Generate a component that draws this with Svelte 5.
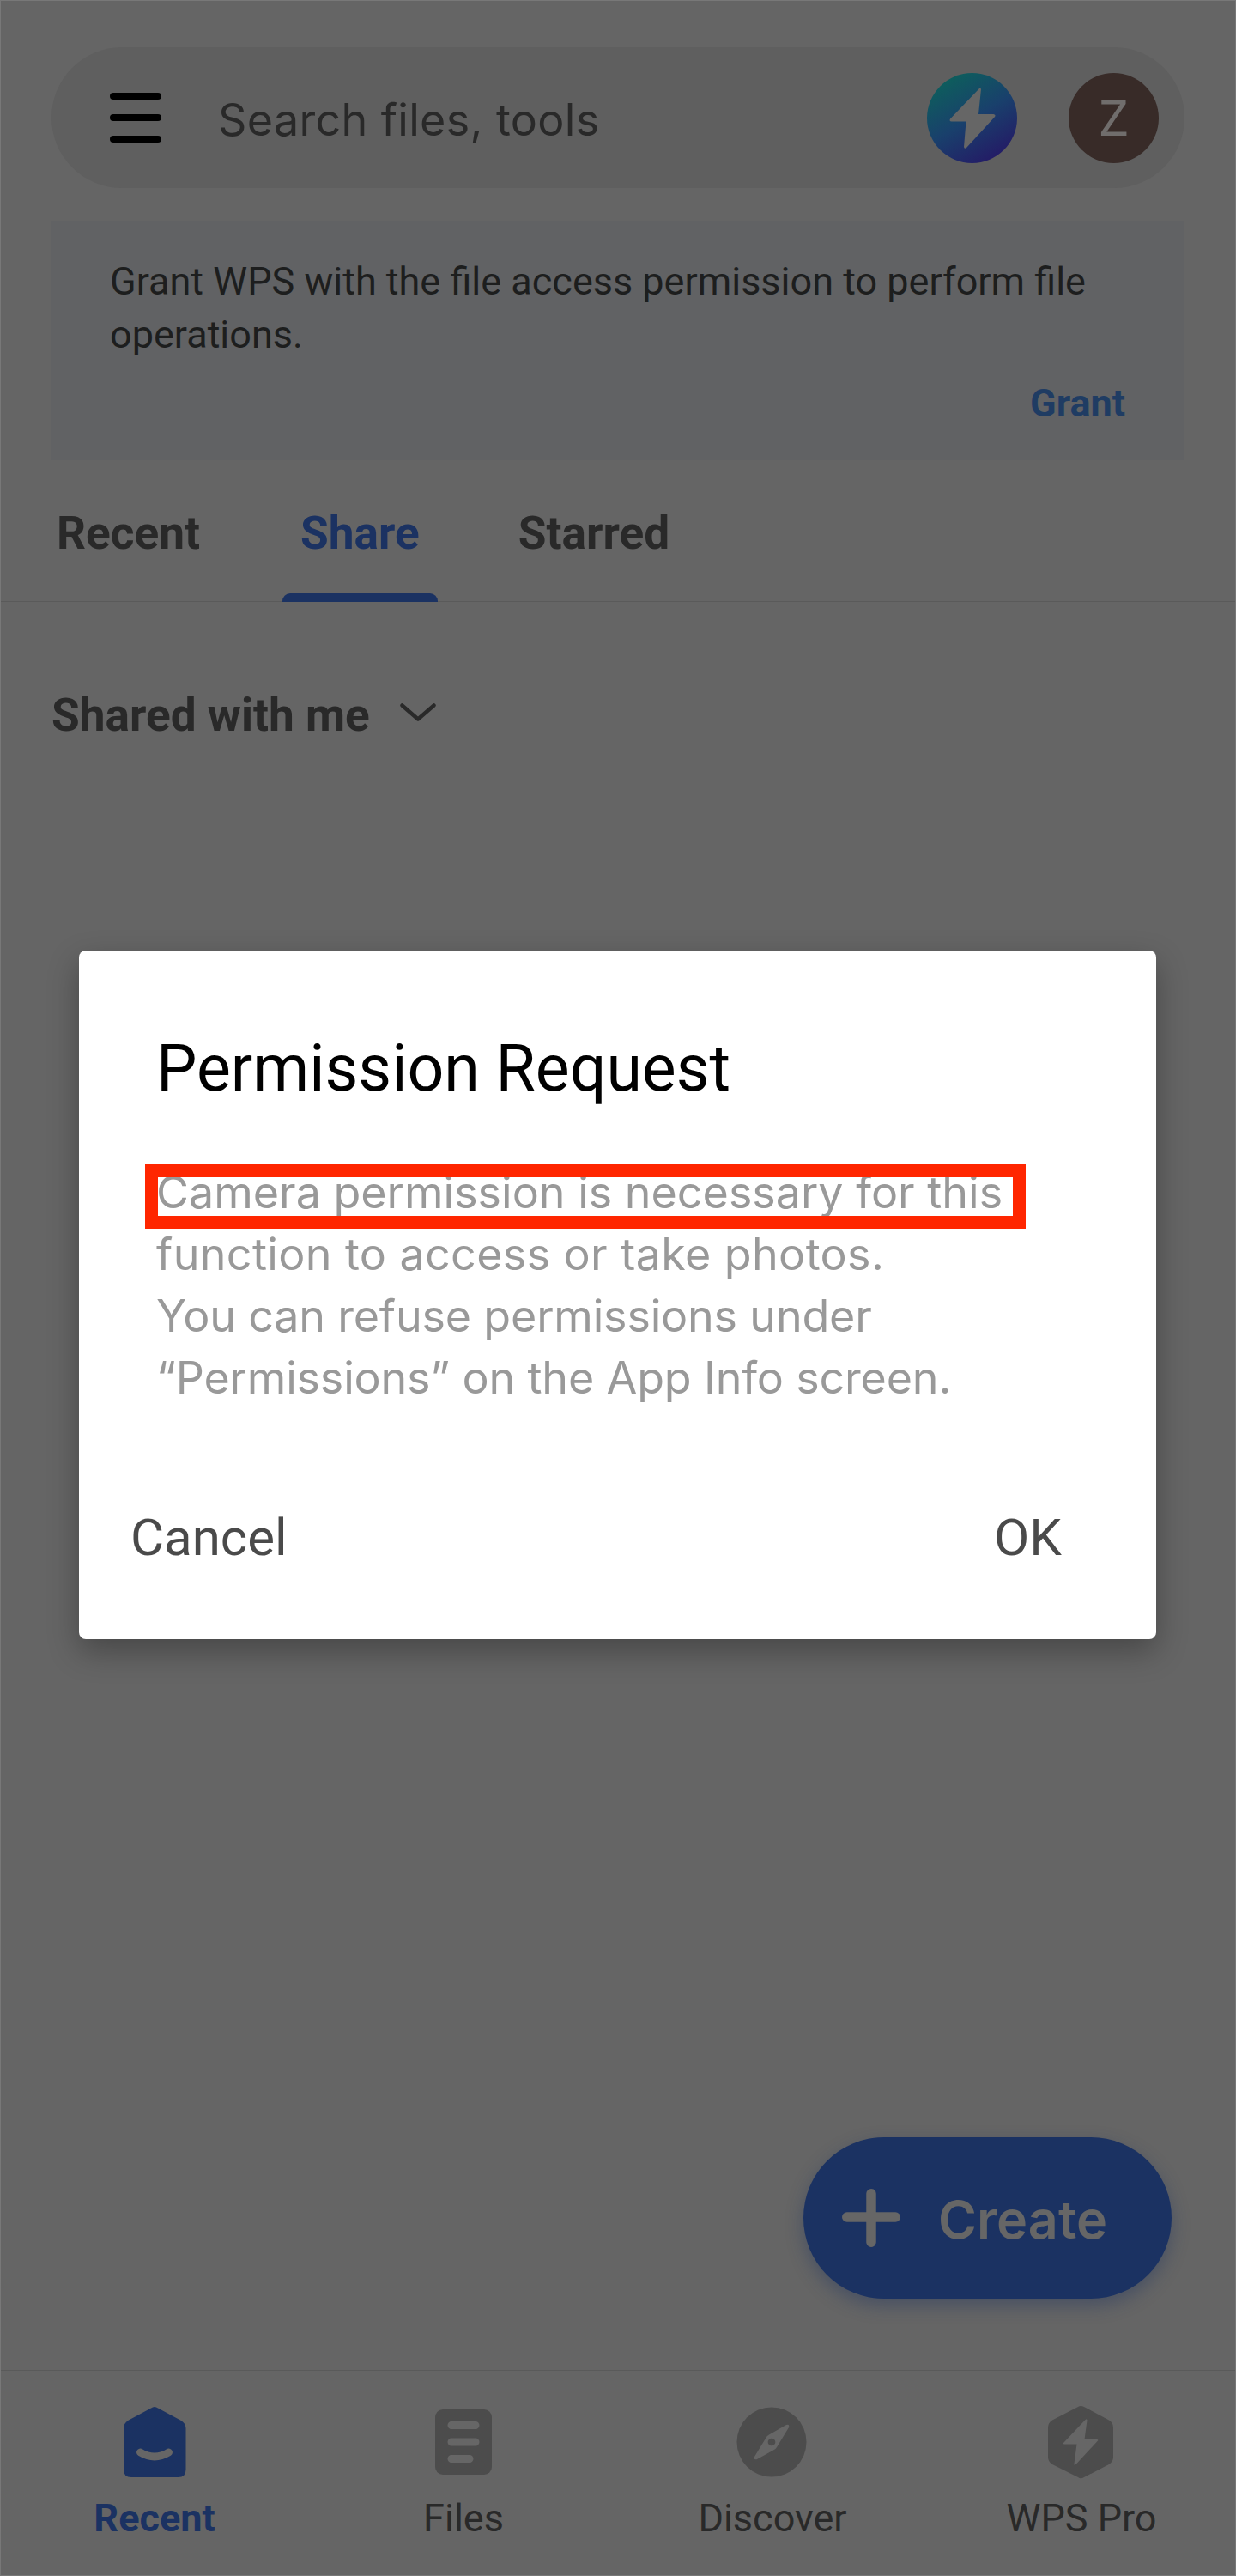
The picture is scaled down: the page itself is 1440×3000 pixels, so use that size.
<script>
  const tabs = [
    { label: 'Recent', active: false },
    { label: 'Share', active: true },
    { label: 'Starred', active: false }
  ];
  const message = [
    'Camera permission is necessary for this',
    'function to access or take photos.',
    'You can refuse permissions under',
    '“Permissions” on the App Info screen.'
  ];
  const nav = [
    { id: 'home', label: 'Recent', active: true },
    { id: 'files', label: 'Files', active: false },
    { id: 'discover', label: 'Discover', active: false },
    { id: 'pro', label: 'WPS Pro', active: false }
  ];
</script>

<div class="screen">
  <header class="search">
    <svg class="menu" width="60" height="58" viewBox="0 0 60 58">
      <rect y="0" width="60" height="8" rx="4" />
      <rect y="25" width="60" height="8" rx="4" />
      <rect y="50" width="60" height="8" rx="4" />
    </svg>
    <span class="placeholder">Search files, tools</span>
    <svg class="boost" width="105" height="105" viewBox="0 0 105 105">
      <defs>
        <linearGradient id="boost-fill" x1="0.2" y1="0.05" x2="0.75" y2="0.98">
          <stop offset="0" stop-color="#0d5f5c" />
          <stop offset="0.5" stop-color="#19406c" />
          <stop offset="1" stop-color="#241a66" />
        </linearGradient>
      </defs>
      <circle cx="52.5" cy="52.5" r="52.5" fill="url(#boost-fill)" />
      <path d="M61 18L27 53.500Q25.500 56 28.500 56.500H45.500L43 86Q43.500 89 46 87L79 51Q80.500 48.500 77.500 48H60L63 19Q62.500 16.500 61 18Z" fill="#666" />
    </svg>
    <span class="avatar">Z</span>
  </header>

  <section class="banner">
    <p>Grant WPS with the file access permission to perform file operations.</p>
    <span class="grant">Grant</span>
  </section>

  <nav class="tabs">
    {#each tabs as tab}
      <span class="tab" class:active={tab.active}>{tab.label}</span>
    {/each}
  </nav>

  <div class="filter">
    <span>Shared with me</span>
    <svg width="42" height="22" viewBox="0 0 42 22">
      <path d="M2.500 2.500L21 18.500L39.500 2.500" fill="none" stroke="#292929" stroke-width="4.500" stroke-linecap="round" stroke-linejoin="round" />
    </svg>
  </div>

  <div class="create">
    <svg width="68" height="68" viewBox="0 0 68 68">
      <path d="M34 5.750V62.250M5.750 33H62.250" stroke="#666" stroke-width="11.500" stroke-linecap="round" />
    </svg>
    <span>Create</span>
  </div>

  <footer class="bottom">
    {#each nav as item}
      <div class="item" class:active={item.active}>
        <svg width="88" height="88" viewBox="0 0 88 88">
          {#if item.id === 'home'}
            <path d="M40 4.500Q44 1.500 48 4.500L75 19Q80.500 22.500 80.500 28V76Q80.500 85 71.500 85H17Q8 85 8 76V28Q8 22.500 13 19Z" fill="#1b3262" />
            <path d="M27.500 56Q44 66 60.500 56" fill="none" stroke="#666" stroke-width="9" stroke-linecap="round" />
          {:else if item.id === 'files'}
            <rect x="11" y="6" width="66" height="76" rx="9" fill="#4c4c4c" />
            <path d="M30 24.500H58M30 44H58M30 63.500H51" stroke="#666" stroke-width="9" stroke-linecap="round" />
          {:else if item.id === 'discover'}
            <circle cx="43" cy="44" r="40.500" fill="#4c4c4c" />
            <path d="M60 24Q64 22.500 63 27L49 50Q48 52 45 53.500L26 64Q21.500 65 23 61L36.500 39Q37 37 40 35.500Z" fill="#666" />
            <circle cx="43" cy="44" r="4.300" fill="#4c4c4c" />
          {:else}
            <path d="M40 3Q43 1 47 3L76 18.500Q81 21.500 81 27V61Q81 67 76 70L47 85Q43 87.500 40 85L10 70Q5 67 5 61V27Q5 21.500 10 18.500Z" fill="#4c4c4c" />
            <path d="M48.500 18L23 45Q22 46.500 24 46.500H38.500L35.500 69Q35 72.500 38 69.500L63 42.500Q64 41 62 41H47.500L50.500 19Q50.500 16 48.500 18Z" fill="#666" />
          {/if}
        </svg>
        <span>{item.label}</span>
      </div>
    {/each}
  </footer>

  <div class="dialog">
    <h1>Permission Request</h1>
    <div class="message">
      {#each message as line, i}
        <span class="line" class:wide={i === 1} class:narrow={i > 1}>{line}</span>
      {/each}
      <i class="highlight"></i>
    </div>
    <div class="actions">
      <span>Cancel</span>
      <span>OK</span>
    </div>
  </div>
</div>

<style>
  :global(body) {
    margin: 0;
    background: #656565;
  }
  .screen {
    position: relative;
    display: flex;
    flex-direction: column;
    box-sizing: border-box;
    width: 1440px;
    height: 3000px;
    padding-top: 54px;
    overflow: hidden;
    background: #656565;
    border: 1px solid #787878;
    font-family: Roboto, sans-serif;
    color: #292929;
    white-space: nowrap;
  }
  .search {
    display: flex;
    align-items: center;
    box-sizing: border-box;
    flex: none;
    height: 164px;
    margin: 0 59px;
    padding: 0 30px 0 68px;
    border-radius: 82px;
    background: #5f5f5f;
  }
  .menu {
    fill: #000;
  }
  .placeholder {
    flex: 1;
    margin: 6px 0 0 66px;
    font: 400 52px/64px Inter, sans-serif;
    letter-spacing: 0.35px;
    color: #292929;
  }
  .boost {
    margin-right: 60px;
  }
  .avatar {
    width: 105px;
    height: 105px;
    border-radius: 50%;
    background: #382b28;
    color: #706d6c;
    font-size: 57px;
    line-height: 108px;
    text-align: center;
  }
  .banner {
    display: flex;
    flex-direction: column;
    box-sizing: border-box;
    flex: none;
    height: 279px;
    margin: 38px 59px 0;
    padding: 40px 69px 0 68px;
    background: #616264;
    font-size: 45px;
    line-height: 62px;
    color: #1d1e1e;
  }
  .banner p {
    margin: 0;
    white-space: normal;
  }
  .grant {
    align-self: flex-end;
    margin-top: 18px;
    font-weight: 700;
    color: #1f3c63;
  }
  .tabs {
    display: flex;
    flex: none;
    height: 164px;
    padding-left: 44px;
    gap: 75px;
    border-bottom: 1px solid #5a5a5a;
    font-size: 53.2px;
    font-weight: 700;
    line-height: 170px;
  }
  .tab {
    display: flex;
    flex-direction: column;
    height: 165px;
    padding: 0 21px;
  }
  .tab:last-child {
    padding-left: 19px;
  }
  .tab.active {
    color: #1b3262;
  }
  .tab.active::after {
    content: '';
    height: 10px;
    margin: -15px -21px 0;
    border-radius: 9px 9px 0 0;
    background: #1b3262;
  }
  .filter {
    display: flex;
    align-items: center;
    flex: none;
    gap: 35px;
    height: 64px;
    margin: 100px 0 0 59px;
    font-size: 53.2px;
    font-weight: 700;
  }
  .filter svg {
    margin-bottom: 7px;
  }
  .create {
    display: flex;
    align-items: center;
    align-self: flex-end;
    box-sizing: border-box;
    width: 429px;
    height: 188px;
    margin: auto 74px 83px 0;
    padding-left: 45px;
    gap: 44px;
    border-radius: 94px;
    background: #1b3262;
    box-shadow: 0 8px 20px rgba(27, 50, 98, 0.4);
    color: #666;
    font: 600 61px/72px Inter, sans-serif;
    letter-spacing: 0.1px;
  }
  .create svg {
    margin-bottom: 1px;
  }
  .create span {
    margin-top: 3px;
  }
  .bottom {
    display: grid;
    grid-template-columns: repeat(4, 360px);
    box-sizing: border-box;
    flex: none;
    width: 1440px;
    height: 239px;
    margin-left: -1px;
    border-top: 1px solid #5a5a5a;
  }
  .item {
    display: flex;
    flex-direction: column;
    align-items: center;
    padding-top: 39px;
    font-size: 45px;
    line-height: 54px;
  }
  .item span {
    margin-top: 18px;
  }
  .item.active {
    color: #1b3262;
    font-weight: 700;
  }
  .dialog {
    position: absolute;
    left: 91px;
    top: 1106px;
    box-sizing: border-box;
    width: 1255px;
    height: 802px;
    padding: 92px 110px 0 60px;
    border-radius: 8px;
    background: #fff;
    box-shadow: 0 14px 36px rgba(0, 0, 0, 0.3);
  }
  h1 {
    margin: 0 0 0 30px;
    font-size: 75.2px;
    font-weight: 400;
    line-height: 90px;
    color: #000;
  }
  .message {
    position: relative;
    display: flex;
    flex-direction: column;
    margin: 64px 0 0 30px;
    font: 400 52px/72px Inter, sans-serif;
    color: #999;
  }
  .line.wide {
    letter-spacing: 0.38px;
  }
  .line.narrow {
    letter-spacing: -0.18px;
  }
  .highlight {
    position: absolute;
    left: -13px;
    top: 3px;
    box-sizing: border-box;
    width: 1026px;
    height: 75px;
    border: 15px solid #ff2600;
  }
  .actions {
    display: flex;
    justify-content: space-between;
    margin-top: 114px;
    font-size: 60px;
    line-height: 72px;
    color: #4a4a4a;
  }
</style>
